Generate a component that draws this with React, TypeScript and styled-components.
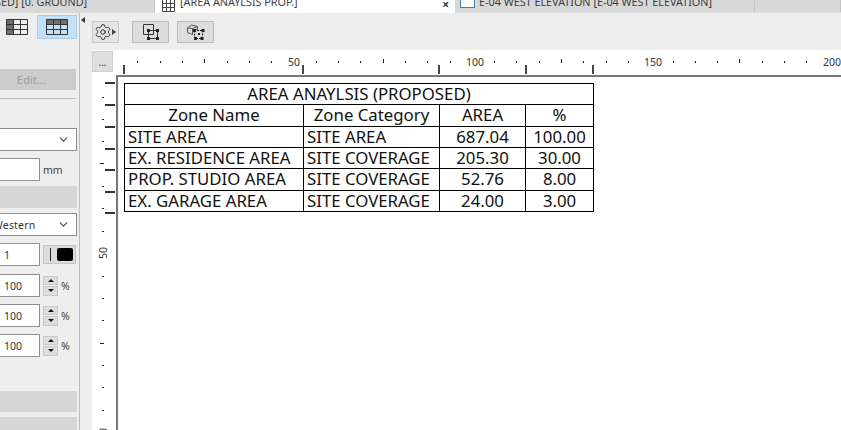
import React from "react";
import styled, { createGlobalStyle } from "styled-components";
import { ChevronDown, Settings } from "lucide-react";

const GlobalStyle = createGlobalStyle`
  html, body {
    margin: 0;
    width: 841px;
    height: 430px;
    overflow: hidden;
    background: #eeeeee;
    font-family: "Noto Sans", "Open Sans", sans-serif;
  }
  * { box-sizing: border-box; }
`;

const Page = styled.div`
  width: 841px;
  height: 430px;
  display: flex;
  flex-direction: column;
  overflow: hidden;
`;

const TabBar = styled.div`
  height: 13px;
  flex: none;
  display: flex;
  overflow: hidden;
  background: #d9d9d9;
`;

const Tab = styled.div<{ $width: number; $active?: boolean }>`
  width: ${p => p.$width}px;
  height: ${p => (p.$active ? 13 : 12)}px;
  flex: none;
  display: flex;
  align-items: flex-end;
  position: relative;
  overflow: hidden;
  background: ${p => (p.$active ? "#ffffff" : "#d8d8d8")};
  border-right: 1px solid ${p => (p.$active ? "#ffffff" : "#c4c4c4")};
  font-size: 10.8px;
  color: #3c3c3c;
  white-space: nowrap;
`;

const TabLabel = styled.span<{ $left?: number; $bottom: number }>`
  display: block;
  line-height: 14px;
  margin-bottom: ${p => p.$bottom}px;
  margin-left: ${p => p.$left ?? 0}px;
`;

const TabIcon = styled.svg<{ $left: number; $bottom: number }>`
  flex: none;
  margin-left: ${p => p.$left}px;
  margin-bottom: ${p => p.$bottom}px;
`;

const TabClose = styled.span`
  position: absolute;
  right: 5px;
  top: -4px;
  font-size: 12px;
  font-weight: 700;
  color: #333;
`;

const Body = styled.div`
  flex: 1;
  display: flex;
  min-height: 0;
`;

const Sidebar = styled.aside`
  width: 80px;
  flex: none;
  display: flex;
  flex-direction: column;
  padding-top: 2px;
  overflow: hidden;
  background: #eeeeee;
  border-right: 1px solid #bcbcbc;
`;

const ViewRow = styled.div`
  height: 24px;
  flex: none;
  display: flex;
  align-items: center;
  padding-left: 6px;
  gap: 9px;
`;

const ViewButton = styled.button<{ $active?: boolean }>`
  width: ${p => (p.$active ? 40 : 22)}px;
  height: 24px;
  padding: 0;
  display: flex;
  align-items: center;
  justify-content: center;
  background: ${p => (p.$active ? "#c5dff4" : "transparent")};
  border: ${p => (p.$active ? "1px solid #a9cfec" : "none")};
`;

const EditButton = styled.div`
  width: 76px;
  height: 21px;
  flex: none;
  margin-top: 30px;
  display: flex;
  align-items: center;
  padding-left: 17px;
  background: #cccccc;
  color: #9a9a9a;
  font-size: 10.5px;
  letter-spacing: 0.3px;
`;

const Rule = styled.div`
  height: 1px;
  width: 76px;
  flex: none;
  margin-top: 8px;
  background: #bdbdbd;
`;

const Select = styled.div<{ $top: number }>`
  width: 77px;
  height: 23px;
  flex: none;
  margin-top: ${p => p.$top}px;
  display: flex;
  align-items: center;
  justify-content: space-between;
  padding: 0 6px 0 0;
  background: #ffffff;
  border: 1px solid #8e8e8e;
  border-left: none;
  font-size: 10.5px;
  color: #333;
  overflow: hidden;
`;

const ClippedLabel = styled.span`
  margin-left: -7px;
  letter-spacing: 0.2px;
`;

const FieldRow = styled.div<{ $top: number }>`
  height: 23px;
  flex: none;
  margin-top: ${p => p.$top}px;
  display: flex;
  align-items: center;
`;

const Input = styled.div`
  width: 40px;
  height: 23px;
  flex: none;
  display: flex;
  align-items: center;
  padding-left: 4px;
  background: #ffffff;
  border: 1px solid #8e8e8e;
  border-left: none;
  font-size: 10.5px;
  color: #333;
`;

const Unit = styled.span`
  margin-left: 3px;
  font-size: 10.5px;
  color: #444;
`;

const SectionBar = styled.div<{ $top: number; $height: number }>`
  width: 77px;
  height: ${p => p.$height}px;
  flex: none;
  margin-top: ${p => p.$top}px;
  background: #d6d6d6;
`;

const ColorButton = styled.div`
  width: 33px;
  height: 19px;
  margin-left: 3px;
  display: flex;
  align-items: center;
  padding-left: 6px;
  gap: 6px;
  background: #dddddd;
  border: 1px solid #c4c4c4;
`;

const ColorLine = styled.span`
  width: 1px;
  height: 13px;
  background: #222;
`;

const ColorSwatch = styled.span`
  width: 16px;
  height: 13px;
  border-radius: 2px;
  background: #000;
`;

const Spinner = styled.div`
  width: 15px;
  height: 20px;
  margin-left: 3px;
  display: flex;
  flex-direction: column;
  gap: 1px;
  flex: none;
`;

const SpinHalf = styled.div<{ $down?: boolean }>`
  flex: 1;
  display: flex;
  align-items: center;
  justify-content: center;
  background: #dddddd;
  border: 1px solid #c8c8c8;
  &::after {
    content: "";
    border-left: 3px solid transparent;
    border-right: 3px solid transparent;
    border-${p => (p.$down ? "top" : "bottom")}: 3px solid #111;
  }
`;

const Main = styled.main`
  flex: 1;
  min-width: 0;
  display: flex;
  flex-direction: column;
`;

const Toolbar = styled.div`
  height: 37px;
  flex: none;
  display: flex;
  align-items: flex-start;
  padding: 8px 0 0 12px;
  background: #eeeeee;
  position: relative;
`;

const Collapse = styled.span`
  position: absolute;
  left: 1px;
  top: 4px;
  border-top: 3.5px solid transparent;
  border-bottom: 3.5px solid transparent;
  border-right: 4px solid #333;
`;

const GearButton = styled.button`
  width: 27px;
  height: 22px;
  padding: 0 0 0 1px;
  margin-right: 13px;
  display: flex;
  align-items: center;
  gap: 0;
  background: #e4e4e4;
  border: 1px solid #c6c6c6;
  color: #222;
`;

const GearArrow = styled.span`
  border-top: 3px solid transparent;
  border-bottom: 3px solid transparent;
  border-left: 4px solid #444;
`;

const ToolButton = styled.button`
  width: 37px;
  height: 22px;
  padding: 0;
  margin-right: 8px;
  display: flex;
  align-items: center;
  justify-content: center;
  background: #dddddd;
  border: 1px solid #bdbdbd;
`;

const Workspace = styled.div`
  flex: 1;
  min-height: 0;
  margin-left: 12px;
  display: grid;
  grid-template-columns: 24px 1fr;
  grid-template-rows: 25px 1fr;
  background: #ffffff;
`;

const Corner = styled.div`
  position: relative;
`;

const MoreButton = styled.div`
  width: 21px;
  height: 21px;
  margin-top: 1px;
  display: flex;
  align-items: flex-end;
  justify-content: center;
  padding-bottom: 4px;
  background: #dedede;
  border: 1px solid #d0d0d0;
  font-size: 10px;
  line-height: 10px;
  color: #333;
`;

const RulerSvg = styled.svg`
  display: block;
  overflow: visible;
`;

const RulerText = styled.text`
  font-family: "Noto Sans", sans-serif;
  font-size: 10.5px;
  fill: #333;
`;

const Sheet = styled.div`
  border-left: 2px solid #777;
  border-top: 2px solid #777;
  padding: 6px 0 0 6px;
  overflow: hidden;
`;

const Schedule = styled.table`
  width: 469px;
  height: 129px;
  table-layout: fixed;
  border-collapse: collapse;
  font-size: 16.8px;
  color: #111;
`;

const Cell = styled.td<{ $center?: boolean }>`
  height: 21.3px;
  padding: 0 0 0 3px;
  border: 1px solid #000;
  line-height: 18px;
  white-space: nowrap;
  overflow: hidden;
  text-align: ${p => (p.$center ? "center" : "left")};
  ${p => p.$center && "padding: 0;"}
`;

const GridIcon = ({ header }: { header?: "row" | "column" }) => (
  <svg width="22" height="16" viewBox="0 0 22 16">
    {header === "column" && <rect x="0.5" y="0.5" width="7" height="15" fill="#6e6e6e" />}
    {header === "row" && <rect x="0.5" y="0.5" width="21" height="5" fill="#6e6e6e" />}
    <path d="M.5.5h21v15H.5zM.5 5.5h21M.5 10.500h21M7.500.5v15M14.500.5v15" fill="none" stroke="#333" />
  </svg>
);

const OutlineIcon = () => (
  <svg width="20" height="18" viewBox="0 0 20 18" fill="none" stroke="#333">
    <path d="M2.500 1.500h10v10h-10z" />
    <path d="M7.500 7.500h9v8h-9z" />
    <path d="M6 6h3v3H6zM15 6h3v3h-3zM6 14h3v3H6zM15 14h3v3h-3z" fill="#222" stroke="none" />
  </svg>
);

const CubeIcon = () => (
  <svg width="20" height="18" viewBox="0 0 20 18" fill="none" stroke="#555">
    <path d="M1.500 5l4-3 6 1.500v3l-5 1v4l-5-2zM6.500 5.500l-5-.5M11.500 3.500l-5 2v2" />
    <path d="M8 7.500h9l-1 8H9z" strokeDasharray="2 1" stroke="#222" />
    <path d="M7 6h3v3H7zM15.500 6h3v3h-3zM8 14h3v3H8zM14.500 14h3v3h-3zM12 10h2v2h-2z" fill="#222" stroke="none" />
  </svg>
);

const tickX = Array.from({ length: 33 }, (_, i) => 115 + 22.3 * (i + 1));

// ruler svg starts at x=116 on the page, so ticks are shifted by that much
const HorizontalRuler = () => (
  <RulerSvg width="725" height="25" viewBox="116 50 725 25">
    {tickX.map((x, i) => {
      const n = i + 1;
      if (n % 8 === 0) return null;
      const long = n % 8 === 4;
      return <rect key={x} x={Math.round(x)} y={long ? 59 : 61} width="1" height={long ? 4 : 2} fill="#222" />;
    })}
    {[123, 302, 438, 525, 592].map(x => (
      <rect key={x} x={x} y="65" width="2" height="9" fill="#444" />
    ))}
    <RulerText x="288" y="66">50</RulerText>
    <RulerText x="466" y="66">100</RulerText>
    <RulerText x="644" y="66">150</RulerText>
    <RulerText x="823" y="66">200</RulerText>
  </RulerSvg>
);

const dotY = [97, 119, 141, 163, 186, 208, 231, 276, 298, 320, 343, 365, 387, 410];

const VerticalRuler = () => (
  <RulerSvg width="24" height="355" viewBox="92 75 24 355">
    {dotY.map(y => {
      const long = y === 163 || y === 343;
      return <rect key={y} x={long ? 100 : 102} y={y} width={long ? 4 : 2} height="1" fill="#222" />;
    })}
    {[82, 104, 126, 148, 169, 191, 212].map(y => (
      <rect key={y} x="105" y={y} width="10" height="2" fill="#333" />
    ))}
    <RulerText transform="rotate(-90 107 259)" x="107" y="259">50</RulerText>
    <RulerText transform="rotate(-90 107 434)" x="107" y="434">0</RulerText>
  </RulerSvg>
);

const rows = [
  ["SITE AREA", "SITE AREA", "687.04", "100.00"],
  ["EX. RESIDENCE AREA", "SITE COVERAGE", "205.30", "30.00"],
  ["PROP. STUDIO AREA", "SITE COVERAGE", "52.76", "8.00"],
  ["EX. GARAGE AREA", "SITE COVERAGE", "24.00", "3.00"],
];

const PercentField = ({ top }: { top: number }) => (
  <FieldRow $top={top}>
    <Input>100</Input>
    <Spinner>
      <SpinHalf />
      <SpinHalf $down />
    </Spinner>
    <Unit>%</Unit>
  </FieldRow>
);

const App = () => {
  return (
    <Page>
      <GlobalStyle />
      <TabBar>
        <Tab $width={155}>
          <TabLabel $left={-5} $bottom={3}>SED] [0. GROUND]</TabLabel>
        </Tab>
        <Tab $width={300} $active>
          <TabIcon $left={7} $bottom={1} width="13" height="13" viewBox="0 0 13 13" fill="none" stroke="#444">
            <path d="M.5.5h12v12H.5zM.5 4.500h12M.5 8.500h12M4.500.5v12M8.500.5v12" />
          </TabIcon>
          <TabLabel $left={5} $bottom={4}>[AREA ANAYLSIS PROP.]</TabLabel>
          <TabClose>×</TabClose>
        </Tab>
        <Tab $width={300}>
          <TabIcon $left={5} $bottom={4} width="15" height="13" viewBox="0 0 15 13" fill="none" stroke="#3f7fb5">
            <rect x="0.5" y="0.5" width="14" height="12" fill="#fff" />
          </TabIcon>
          <TabLabel $left={4} $bottom={3}>E-04 WEST ELEVATION [E-04 WEST ELEVATION]</TabLabel>
        </Tab>
        <Tab $width={86} />
      </TabBar>
      <Body>
        <Sidebar>
          <ViewRow>
            <ViewButton>
              <GridIcon header="column" />
            </ViewButton>
            <ViewButton $active>
              <GridIcon header="row" />
            </ViewButton>
          </ViewRow>
          <EditButton>Edit...</EditButton>
          <Rule />
          <Select $top={29}>
            <span />
            <ChevronDown size={13} color="#444" />
          </Select>
          <FieldRow $top={7}>
            <Input />
            <Unit>mm</Unit>
          </FieldRow>
          <SectionBar $top={5} $height={22} />
          <Select $top={5}>
            <ClippedLabel>Western</ClippedLabel>
            <ChevronDown size={13} color="#444" />
          </Select>
          <FieldRow $top={7}>
            <Input>1</Input>
            <ColorButton>
              <ColorLine />
              <ColorSwatch />
            </ColorButton>
          </FieldRow>
          <PercentField top={8} />
          <PercentField top={7} />
          <PercentField top={7} />
          <SectionBar $top={34} $height={21} />
          <SectionBar $top={5} $height={21} />
        </Sidebar>
        <Main>
          <Toolbar>
            <Collapse />
            <GearButton>
              <Settings size={18} strokeWidth={1.2} />
              <GearArrow />
            </GearButton>
            <ToolButton>
              <OutlineIcon />
            </ToolButton>
            <ToolButton>
              <CubeIcon />
            </ToolButton>
          </Toolbar>
          <Workspace>
            <Corner>
              <MoreButton>...</MoreButton>
            </Corner>
            <HorizontalRuler />
            <VerticalRuler />
            <Sheet>
              <Schedule>
                <colgroup>
                  <col width="179" />
                  <col width="136" />
                  <col width="86" />
                  <col width="68" />
                </colgroup>
                <tbody>
                  <tr>
                    <Cell colSpan={4} $center>AREA ANAYLSIS (PROPOSED)</Cell>
                  </tr>
                  <tr>
                    <Cell $center>Zone Name</Cell>
                    <Cell $center>Zone Category</Cell>
                    <Cell $center>AREA</Cell>
                    <Cell $center>%</Cell>
                  </tr>
                  {rows.map(r => (
                    <tr key={r[0]}>
                      <Cell>{r[0]}</Cell>
                      <Cell>{r[1]}</Cell>
                      <Cell $center>{r[2]}</Cell>
                      <Cell $center>{r[3]}</Cell>
                    </tr>
                  ))}
                </tbody>
              </Schedule>
            </Sheet>
          </Workspace>
        </Main>
      </Body>
    </Page>
  );
};

export default App;
